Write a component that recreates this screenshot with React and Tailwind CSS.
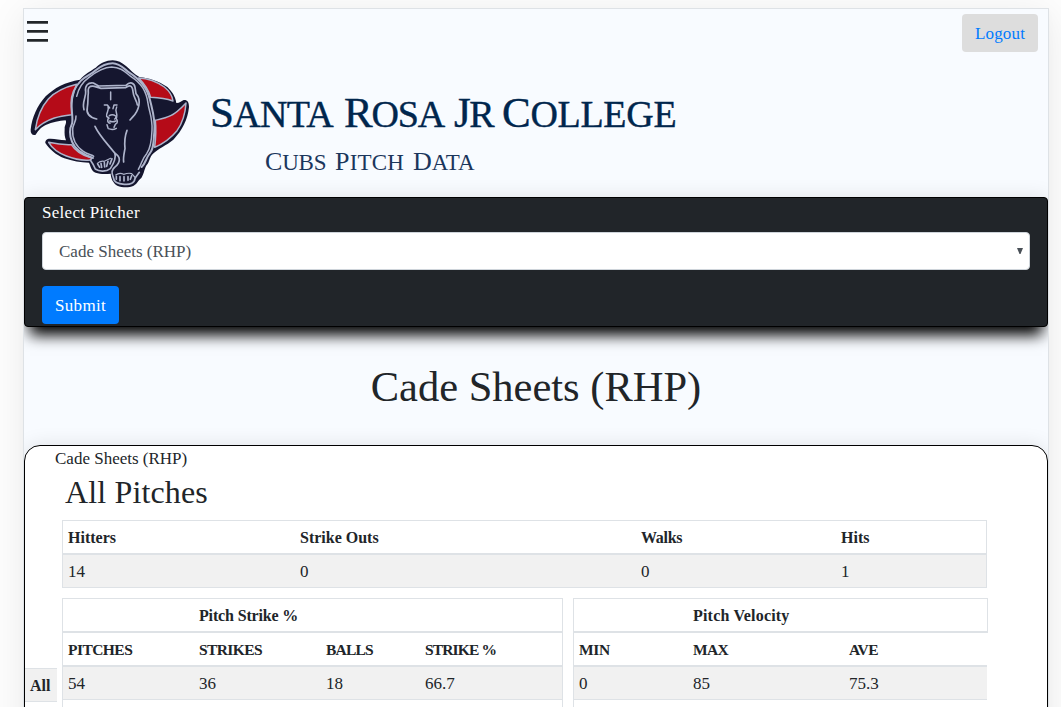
import React from "react";

function Logo() {
  return (
    <svg className="block h-[130px] w-[160px]" viewBox="90 180 480 390" fill="none" strokeLinecap="round" strokeLinejoin="round">
      <path fill="#15162f" d="M338 181C318 181 302 190 287 203C270 214 254 222 240 239C196 246 162 264 137 289C111 318 96 352 92 389C91 401 98 407 107 404C115 392 122 382 137 375C158 366 177 363 197 361C201 370 193 377 194 386C193 402 194 410 198 421C180 419 166 417 152 416C141 415 135 421 136 429C150 449 167 464 193 475C217 483 242 488 267 488C273 500 273 512 287 518C300 523 318 522 332 521C333 536 339 549 352 557C367 563 386 564 401 557C413 551 413 541 424 534C434 518 433 503 442 493C449 483 449 471 459 461C475 446 499 436 520 419C547 391 563 359 567 321C567 306 562 299 551 300C543 304 537 310 529 309C526 289 516 274 502 261C476 243 448 234 418 231C401 222 391 209 378 198C366 188 353 181 338 181Z" />
      <g stroke="#aeb4cb" strokeWidth="4.5">
        <path fill="#b50b18" d="M230 253C196 261 166 275 145 297C123 322 111 354 106 389C122 372 142 361 163 354C181 348 198 346 215 344C213 313 217 281 230 253Z" />
        <path fill="#b50b18" d="M416 234C438 235 469 244 493 261C508 273 517 287 519 303C500 296 482 293 452 292C446 269 434 252 416 234Z" />
        <path fill="#b50b18" d="M558 309C544 324 528 340 512 347C498 354 483 357 466 361C469 388 467 417 464 442C487 432 512 415 531 392C549 367 556 339 558 309Z" />
        <path fill="#b50b18" d="M146 427C156 445 176 459 199 468C222 477 249 482 270 480C276 478 276 474 269 472C244 465 225 451 214 434C192 435 169 432 146 427Z" />
        <path strokeWidth="6" d="M279 474C249 464 224 446 216 425C207 403 208 387 216 371C220 357 214 330 214 310C214 282 227 258 243 242C257 228 273 224 287 211C303 198 319 190 338 190C359 190 372 206 388 218C421 239 442 264 450 300C458 334 467 360 463 396C460 422 463 446 448 462C437 476 437 490 425 501" />
        <path d="M230 289C236 262 249 245 267 232C286 217 310 202 335 201C363 202 373 214 392 229C425 250 439 274 444 310C447 334 458 353 456 390C455 420 452 445 440 461C426 476 426 490 415 508" />
        <path d="M228 348C229 367 218 373 218 388C216 420 230 440 250 454C265 465 276 464 281 469" />
        <path strokeWidth="5" d="M252 329C245 308 259 290 257 275C254 256 264 247 280 249L296 258L378 256C391 243 403 249 405 262L408 281C426 301 416 331 399 350L390 360M290 357C269 352 258 340 262 322C265 304 263 294 265 279C263 262 268 257 283 259L303 265L377 263C392 251 398 260 399 275C400 292 410 299 412 315" />
        <path strokeWidth="4.5" d="M332 276V299M313 315H322L329 324M351 315H342L339 326M324 320C329 333 317 338 320 349L327 355M350 321C343 334 354 342 350 352L344 357M328 347Q337 341 347 348M326 352Q319 368 330 370M347 352Q357 368 347 372M329 363Q338 368 347 363M321 374L324 384M346 373L342 382M325 386Q338 391 349 385" />
        <path strokeWidth="5" d="M285 379C298 407 322 431 344 459C363 471 362 486 345 501C335 508 335 521 340 532C341 546 356 552 373 553C391 555 404 548 405 535L418 517M381 391C376 404 373 426 375 446C372 462 369 473 371 486M344 458C350 474 342 489 331 506C317 517 296 514 286 507C282 496 278 490 271 480M293 492L299 502M303 490L305 502M313 488L314 501M324 484L320 499M336 476L330 492M349 529V538M360 530V542M372 530V543M384 530V541M395 527L391 538" />
        <path strokeWidth="3.5" d="M347 525Q359 516 371 523Q386 518 395 521L407 534M292 490Q303 481 313 484L332 475" />
      </g>
    </svg>
  );
}

function Word({ first, rest, firstClass, className }) {
  return (
    <span className={`block shrink-0 uppercase ${className}`}>
      <span className={firstClass}>{first}</span>
      {rest}
    </span>
  );
}

function Cell({ className = "", children }) {
  return <div className={`shrink-0 whitespace-nowrap pl-[5px] ${className}`}>{children}</div>;
}

const head = "flex h-[34px] items-center border-b-2 border-[#dee2e6] pt-px text-[16px] font-bold";
const head2 = "flex h-[34px] items-center border-b-2 border-[#dee2e6] pt-px text-[15.5px] font-bold";
const row = "flex h-[33px] items-center bg-[#f1f1f1] pt-px text-[17px]";

export default function App() {
  return (
    <div className="h-[707px] overflow-hidden bg-[#fdfdfd] pl-[23px] pt-2 font-['Liberation_Serif',serif] text-[17px] text-[#212529]">
      <div className="h-[760px] w-[1026px] border border-[#dee2e6] bg-[#f8fbff] shadow-[0_4px_8px_0_rgba(0,0,0,0.02),0_6px_36px_0_rgba(0,0,0,0.08)]">
        <div className="h-full overflow-hidden">
          <header className="flex h-[188px] flex-col">
            <div className="flex h-[51px] justify-between">
              <button aria-label="Menu" className="ml-[3px] mt-3 flex h-[21px] w-[21px] flex-col justify-between">
                <span className="h-[3px] w-full border-b border-[#5a5e62] bg-[#212529]" />
                <span className="h-[3px] w-full border-b border-[#5a5e62] bg-[#212529]" />
                <span className="h-[3px] w-full border-b border-[#5a5e62] bg-[#212529]" />
              </button>
              <button className="mr-2.5 mt-[5px] h-[38px] w-[76px] rounded bg-[#ddd] pt-px tracking-[0.17px] text-[#007bff]">Logout</button>
            </div>
            <div className="flex pl-1.5">
              <Logo />
              <div className="pl-5 pt-[26px]">
                <h1 className="flex h-[54px] items-baseline text-[38px] leading-[54px] text-[#00264d] [-webkit-text-stroke:0.4px_#00264d]">
                  <Word first="S" rest="anta" firstClass="text-[43px]" className="w-[134px] tracking-[-0.7px]" />
                  <Word first="R" rest="osa" firstClass="text-[43px]" className="w-[110px] tracking-[-1.2px]" />
                  <Word first="J" rest="r" firstClass="text-[43px]" className="w-[48px] tracking-[-1.4px]" />
                  <Word first="C" rest="ollege" firstClass="text-[43px]" className="tracking-[-0.3px]" />
                </h1>
                <h2 className="flex h-[36px] items-baseline pl-[55px] pt-1 text-[23px] leading-[36px] text-[#1b365c]">
                  <Word first="C" rest="ubs" firstClass="text-[26px]" className="w-[70px] tracking-[-0.2px]" />
                  <Word first="P" rest="itch" firstClass="text-[26px]" className="w-[78px] tracking-[0.2px]" />
                  <Word first="D" rest="ata" firstClass="text-[26px]" />
                </h2>
              </div>
            </div>
          </header>

          <form className="flex h-[130px] flex-col items-start rounded border border-black bg-[#212529] px-[17px] shadow-[0_14px_14px_-6px_#000,0_0_20px_rgba(0,0,0,0.1)]">
            <label className="h-[34px] pt-[3px] leading-6 tracking-[0.28px] text-white">Select Pitcher</label>
            <div className="flex h-[38px] w-full items-center justify-between rounded border border-[#ced4da] bg-white pl-4 pr-1.5 text-[#495057]">
              <span className="pt-px">Cade Sheets (RHP)</span>
              <svg className="h-1.5 w-1.5" viewBox="0 0 6 6"><path fill="#495057" d="M0 0H6L3.5 6H2.5Z" /></svg>
            </div>
            <button className="mt-4 h-[38px] w-[77px] rounded bg-[#007bff] pt-px tracking-[0.3px] text-white">Submit</button>
          </form>

          <h1 className="h-[118px] pt-[36px] text-center text-[42.5px] leading-[48px]">Cade Sheets (RHP)</h1>

          <section className="h-[400px] rounded-2xl border border-black bg-white shadow-[0_0_20px_rgba(0,0,0,0.1)]">
            <p className="h-[25px] pl-[30px] leading-[26px]">Cade Sheets (RHP)</p>
            <h2 className="h-[49px] pl-10 text-[32px] leading-[43px] tracking-[0.15px]">All Pitches</h2>
            <div className="flex">
              <div className="w-8 shrink-0 pt-[148px]">
                <div className="flex h-[34px] items-center border-y border-[#dee2e6] bg-[#f1f1f1] pl-[5px] pt-px text-[16px] font-bold">All</div>
              </div>
              <div className="ml-[5px] w-[926px]">
                <div className="w-[925px] border border-b-0 border-[#dee2e6]">
                  <div className={head}>
                    <Cell className="w-[232px]">Hitters</Cell>
                    <Cell className="w-[341px]">Strike Outs</Cell>
                    <Cell className="w-[200px] tracking-[-0.3px]">Walks</Cell>
                    <Cell>Hits</Cell>
                  </div>
                  <div className={`${row} border-b border-[#dee2e6]`}>
                    <Cell className="w-[232px]">14</Cell>
                    <Cell className="w-[341px]">0</Cell>
                    <Cell className="w-[200px]">0</Cell>
                    <Cell>1</Cell>
                  </div>
                </div>
                <div className="mt-2.5 flex gap-2.5">
                  <div className="w-[501px] shrink-0 border-x border-t border-[#dee2e6]">
                    <div className={head}>
                      <Cell className="ml-[131px] tracking-[-0.15px]">Pitch Strike %</Cell>
                    </div>
                    <div className={head2}>
                      <Cell className="w-[131px] tracking-[-0.55px]">PITCHES</Cell>
                      <Cell className="w-[127px] tracking-[-0.6px]">STRIKES</Cell>
                      <Cell className="w-[99px] tracking-[-0.8px]">BALLS</Cell>
                      <Cell className="tracking-[-0.85px]">STRIKE %</Cell>
                    </div>
                    <div className={`${row} border-b border-[#dee2e6]`}>
                      <Cell className="w-[131px]">54</Cell>
                      <Cell className="w-[127px]">36</Cell>
                      <Cell className="w-[99px]">18</Cell>
                      <Cell>66.7</Cell>
                    </div>
                    <div className="h-10" />
                  </div>
                  <div className="w-[415px] shrink-0">
                    <div className="border-x border-t border-[#dee2e6]">
                      <div className={head}>
                        <Cell className="ml-[114px] tracking-[0.2px]">Pitch Velocity</Cell>
                      </div>
                    </div>
                    <div className="w-[414px] border-l border-[#dee2e6]">
                      <div className={head2}>
                        <Cell className="w-[114px] tracking-[-0.3px]">MIN</Cell>
                        <Cell className="w-[156px] tracking-[-0.7px]">MAX</Cell>
                        <Cell className="tracking-[-0.6px]">AVE</Cell>
                      </div>
                      <div className={`${row} border-b border-[#dee2e6]`}>
                        <Cell className="w-[114px]">0</Cell>
                        <Cell className="w-[156px]">85</Cell>
                        <Cell>75.3</Cell>
                      </div>
                      <div className="h-10" />
                    </div>
                  </div>
                </div>
              </div>
            </div>
          </section>
        </div>
      </div>
    </div>
  );
}
